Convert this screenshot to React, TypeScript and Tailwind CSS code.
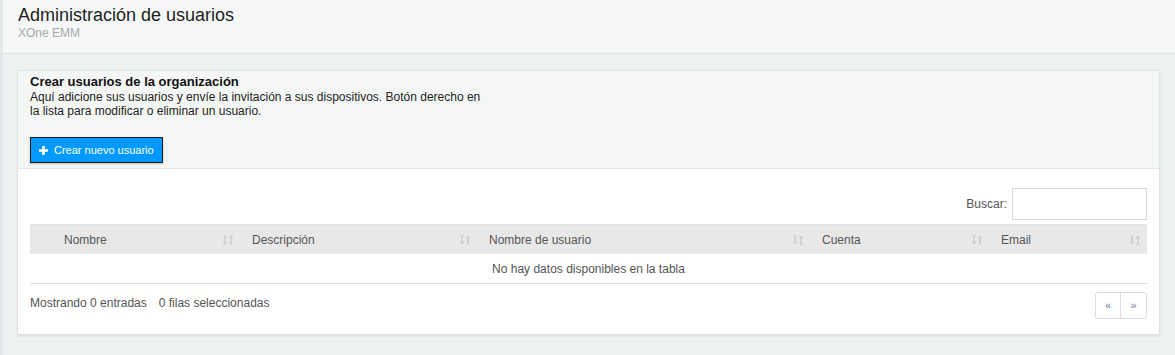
/**
 * Administración de usuarios – XOne EMM user list screen.
 */

const columns = [
  { label: 'Nombre', width: 'w-[188px]' },
  { label: 'Descripción', width: 'w-[237px]' },
  { label: 'Nombre de usuario', width: 'w-[333px]' },
  { label: 'Cuenta', width: 'w-[179px]' },
  { label: 'Email', width: 'flex-1' },
];

function SortIcon() {
  return (
    <svg width="12" height="12" viewBox="0 0 12 12" className="text-[#cfd2d2]" fill="currentColor">
      {/* down arrow */}
      <rect x="2" y="1" width="2" height="7" />
      <path d="M0.5 7.5h5L3 11z" />
      {/* up arrow */}
      <rect x="8" y="4" width="2" height="7" />
      <path d="M6.5 4.5h5L9 1z" />
    </svg>
  );
}

export default function App() {
  return (
    <div className="flex min-h-[355px] bg-[#eef1f2] font-['Liberation_Sans',Arial,sans-serif]">
      {/* left edge */}
      <div className="w-[3px] shrink-0 bg-[#e2e8ea]" />

      <div className="flex-1 flex flex-col">
        {/* Page header */}
        <header className="h-[54px] bg-[#f6f7f7] border-b border-[#dde3e3] pl-[15px] pt-[5px]">
          <h1 className="text-[18px] leading-[21px] text-[#1e1e1e]">Administración de usuarios</h1>
          <p className="text-[12px] leading-[14px] text-[#a7abad]">XOne EMM</p>
        </header>

        {/* Panel */}
        <div className="mt-[16px] ml-[14px] mr-[15px] border border-[#dde3e3] bg-white shadow-[0_2px_2px_rgba(0,0,0,0.06)]">
          <div className="bg-[#f5f7f6] border-b border-[#e3e8e8] px-[12px] pt-[3px] pb-[5px]">
            <h2 className="text-[13px] leading-[16px] font-bold text-[#111]">
              Crear usuarios de la organización
            </h2>
            <p className="w-[460px] text-[12px] leading-[14px] text-[#222]">
              Aquí adicione sus usuarios y envíe la invitación a sus dispositivos. Botón derecho en la lista para modificar o eliminar un usuario.
            </p>
            <button className="mt-[19px] h-[26px] px-[8px] flex items-center gap-[6px] bg-[#0099ff] border border-[#1a1a1a] text-white text-[11px] shadow-[0_1px_2px_rgba(0,0,0,0.25)]">
              <svg width="9" height="9" viewBox="0 0 9 9" fill="currentColor">
                <rect x="3.2" y="0" width="2.6" height="9" />
                <rect x="0" y="3.2" width="9" height="2.6" />
              </svg>
              Crear nuevo usuario
            </button>
          </div>

          <div className="px-[12px] pt-[19px] pb-[15px]">
            {/* Search */}
            <div className="flex justify-end items-center gap-[5px]">
              <label className="text-[12px] text-[#555]">Buscar:</label>
              <input className="w-[135px] h-[32px] border border-[#d3dcdc] bg-white outline-none" />
            </div>

            {/* Table */}
            <div className="mt-[4px]">
              <div className="flex h-[30px] bg-[#e8e8e8] border-t border-[#dfe3e3]">
                <div className="w-[22px]" />
                {columns.map((c) => (
                  <div
                    key={c.label}
                    className={`${c.width} flex items-center justify-between pl-[12px] pr-[6px] text-[12px] text-[#555]`}
                  >
                    <span>{c.label}</span>
                    <SortIcon />
                  </div>
                ))}
              </div>
              <div className="h-[30px] flex items-center justify-center border-b border-[#dde3e3] text-[12px] text-[#555]">
                No hay datos disponibles en la tabla
              </div>
            </div>

            {/* Footer */}
            <div className="mt-[8px] flex items-center justify-between">
              <div className="text-[12px] text-[#555] flex gap-[12px] -mt-[6px]">
                <span>Mostrando 0 entradas</span>
                <span>0 filas seleccionadas</span>
              </div>
              <div className="flex h-[27px] border border-[#dddddd] rounded-[3px] text-[11px] text-[#6f7aa8]">
                <span className="w-[25px] flex items-center justify-center border-r border-[#dddddd]">«</span>
                <span className="w-[25px] flex items-center justify-center">»</span>
              </div>
            </div>
          </div>
        </div>
      </div>
    </div>
  );
}
